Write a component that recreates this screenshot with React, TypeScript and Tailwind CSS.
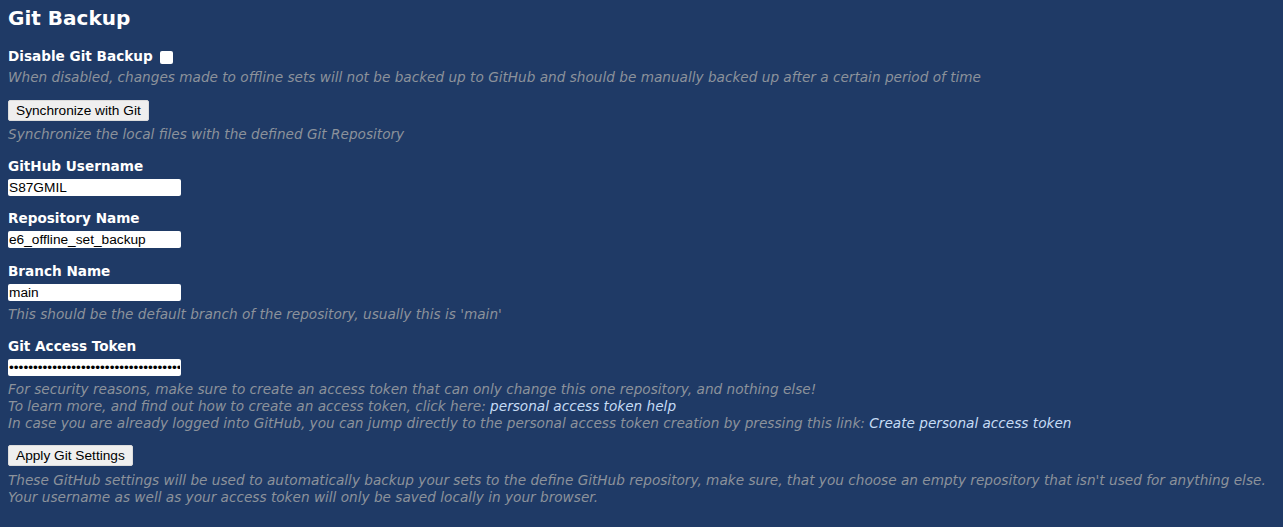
import React from 'react';

const Label: React.FC<{ children: React.ReactNode; className?: string }> = ({ children, className = '' }) => (
  <div className={`font-bold text-[13.6px] leading-[17px] text-white ${className}`}>{children}</div>
);

const Hint: React.FC<{ children: React.ReactNode; className?: string }> = ({ children, className = '' }) => (
  <div className={`italic text-[13.65px] leading-[17px] text-[#8c929b] ${className}`}>{children}</div>
);

const Field: React.FC<{ value: string; type?: string }> = ({ value, type = 'text' }) => (
  <input
    type={type}
    defaultValue={value}
    className="block mt-[4px] w-[173px] h-[17px] bg-white rounded-[2px] px-[1px] text-[13.7px] leading-[17px] text-black outline-none"
    style={{ fontFamily: '"Liberation Sans", Arial, sans-serif' }}
  />
);

const Btn: React.FC<{ children: React.ReactNode; className?: string }> = ({ children, className = '' }) => (
  <button
    className={`block h-[21px] px-[7px] bg-[#efefef] border border-[#dcdcdc] rounded-[2px] text-[13.7px] leading-[19px] text-black ${className}`}
    style={{ fontFamily: '"Liberation Sans", Arial, sans-serif' }}
  >
    {children}
  </button>
);

export default function App() {
  return (
    <div className="min-h-screen bg-[#1f3a66] px-[8px] pt-[6px] pb-4" style={{ fontFamily: '"DejaVu Sans", Verdana, sans-serif' }}>
      <h2 className="text-[20px] leading-[24px] font-bold text-white">Git Backup</h2>

      <Label className="mt-[18px] flex items-center gap-[7px]">
        Disable Git Backup
        <span className="inline-block w-[13px] h-[13px] bg-white rounded-[2px] mt-[2px]" />
      </Label>
      <Hint className="mt-[4px]">
        When disabled, changes made to offline sets will not be backed up to GitHub and should be manually backed up after a certain period of time
      </Hint>

      <Btn className="mt-[14px]">Synchronize with Git</Btn>
      <Hint className="mt-[5px]">Synchronize the local files with the defined Git Repository</Hint>

      <Label className="mt-[15px]">GitHub Username</Label>
      <Field value="S87GMIL" />

      <Label className="mt-[14px]">Repository Name</Label>
      <Field value="e6_offline_set_backup" />

      <Label className="mt-[15px]">Branch Name</Label>
      <Field value="main" />
      <Hint className="mt-[5px]">This should be the default branch of the repository, usually this is 'main'</Hint>

      <Label className="mt-[15px]">Git Access Token</Label>
      <Field value="••••••••••••••••••••••••••••••••••••••••••" type="password" />
      <Hint className="mt-[5px]">
        For security reasons, make sure to create an access token that can only change this one repository, and nothing else!
        <br />
        To learn more, and find out how to create an access token, click here:{' '}
        <a className="text-[#c6dcf5]">personal access token help</a>
        <br />
        In case you are already logged into GitHub, you can jump directly to the personal access token creation by pressing this link:{' '}
        <a className="text-[#c6dcf5]">Create personal access token</a>
      </Hint>

      <Btn className="mt-[13px]">Apply Git Settings</Btn>
      <Hint className="mt-[6px]">
        These GitHub settings will be used to automatically backup your sets to the define GitHub repository, make sure, that you choose an empty repository that isn't used for anything else.
        <br />
        Your username as well as your access token will only be saved locally in your browser.
      </Hint>
    </div>
  );
}
